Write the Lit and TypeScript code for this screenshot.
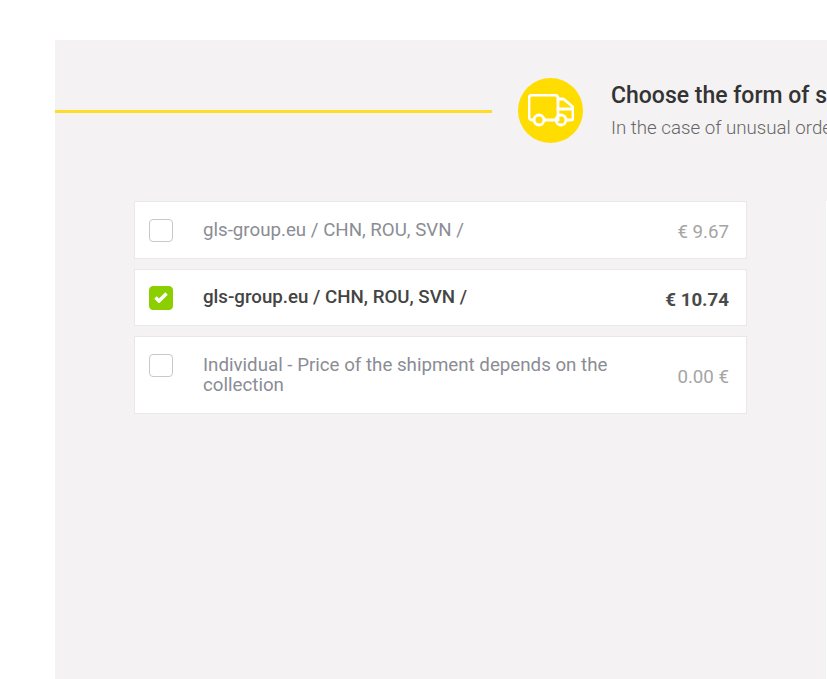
import { LitElement, html, css, svg } from 'lit';
import { customElement } from 'lit/decorators.js';

const OPTIONS = [
  { name: 'gls-group.eu / CHN, ROU, SVN /', price: '€ 9.67', selected: false, tall: false },
  { name: 'gls-group.eu / CHN, ROU, SVN /', price: '€ 10.74', selected: true, tall: false },
  { name: 'Individual - Price of the shipment depends on the collection', price: '0.00 €', selected: false, tall: true },
];

const truck = svg`
  <path d="M6 26H4a3 3 0 0 1-3-3V4a3 3 0 0 1 3-3h23a3 3 0 0 1 3 3v22H16" />
  <path d="M30 26h-2M30 5h5.500L45 13v11a2 2 0 0 1-2 2h-5" />
  <path d="M30 15h15" />
  <circle cx="11" cy="26" r="5" />
  <circle cx="33" cy="26" r="5" />
`;

@customElement('app-root')
export class AppRoot extends LitElement {
  static styles = css`
    :host {
      display: block;
      height: 679px;
      overflow: hidden;
      background: #fff;
      font-family: Roboto, sans-serif;
    }
    .panel {
      display: flex;
      flex-direction: column;
      margin: 40px 0 0 55px;
      height: 639px;
      width: 900px;
      background: #f4f2f3;
      padding-top: 38px;
      box-sizing: border-box;
    }
    .header {
      display: flex;
      align-items: center;
    }
    .line {
      width: 437px;
      height: 3px;
      background: #fddc2a;
      margin: 2px 26px 0 0;
      flex: none;
    }
    .circle {
      width: 65px;
      height: 65px;
      border-radius: 50%;
      background: #ffdd00;
      display: flex;
      align-items: center;
      justify-content: center;
      margin-right: 28px;
      flex: none;
    }
    .circle svg {
      width: 46px;
      height: 33px;
      fill: none;
      stroke: #fff;
      stroke-width: 2.800;
      stroke-linejoin: round;
      stroke-linecap: round;
    }
    .heading {
      white-space: nowrap;
    }
    .title {
      font-size: 23px;
      font-weight: 500;
      line-height: 30px;
      color: #333;
    }
    .sub {
      font-size: 18.720px;
      font-weight: 300;
      line-height: 24px;
      margin-top: 5px;
      color: #666;
    }
    .content {
      flex: 1;
      display: flex;
      margin: 58px 0 0 79px;
    }
    .list {
      display: flex;
      flex-direction: column;
      gap: 10px;
      width: 613px;
      flex: none;
    }
    .side {
      flex: 1;
      margin-left: 79px;
      background: #fff;
    }
    .row {
      display: flex;
      align-items: center;
      box-sizing: border-box;
      height: 58px;
      padding: 0 17px 0 14px;
      background: #fff;
      border: 1px solid #e9e8e8;
    }
    .row.tall {
      height: 78px;
      align-items: flex-start;
    }
    .row.selected {
      height: 57px;
    }
    .box {
      width: 24px;
      height: 23px;
      box-sizing: border-box;
      border: 1px solid #c9c9c9;
      border-radius: 4px;
      background: #fff;
      flex: none;
      margin: 1px 30px 0 0;
      display: flex;
      align-items: center;
      justify-content: center;
    }
    .tall .box {
      margin-top: 17px;
    }
    .selected .box {
      height: 24px;
      margin-top: 0;
      background: #8ccf00;
      border-color: #8ccf00;
    }
    .box svg {
      width: 14px;
      height: 11px;
      fill: none;
      stroke: #fff;
      stroke-width: 3.500;
    }
    .name {
      flex: 1;
      max-width: 420px;
      font-size: 18.720px;
      line-height: 20px;
      color: #8a8d94;
      margin-top: 0;
    }
    .tall .name {
      margin-top: 18px;
    }
    .selected .name {
      color: #444;
      font-weight: 500;
      margin-top: -2px;
    }
    .price {
      margin: 4px 0 0 auto;
      font-size: 18.720px;
      color: #a5a5a5;
      white-space: nowrap;
    }
    .tall .price {
      margin-top: 29px;
    }
    .selected .price {
      color: #4a4a4a;
      font-weight: 700;
    }
  `;

  render() {
    return html`
      <div class="panel">
        <div class="header">
          <div class="line"></div>
          <div class="circle">
            <svg viewBox="0 0 46 33">${truck}</svg>
          </div>
          <div class="heading">
            <div class="title">Choose the form of shipping</div>
            <div class="sub">In the case of unusual orders, please contact us</div>
          </div>
        </div>
        <div class="content">
          <div class="list">
            ${OPTIONS.map((o) => html`
              <div class="row ${o.selected ? 'selected' : ''} ${o.tall ? 'tall' : ''}">
                <div class="box">
                  ${o.selected ? html`<svg viewBox="0 0 14 11"><path d="M1.500 5.500l3.500 3.500 7.500-7.500" /></svg>` : ''}
                </div>
                <div class="name">${o.name}</div>
                <div class="price">${o.price}</div>
              </div>
            `)}
          </div>
          <div class="side"></div>
        </div>
      </div>
    `;
  }
}
